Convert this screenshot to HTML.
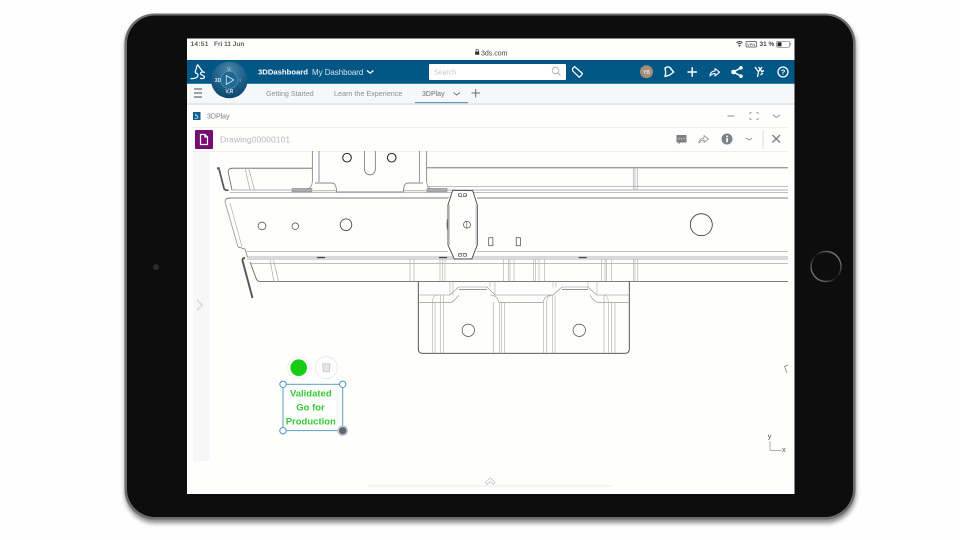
<!DOCTYPE html>
<html><head><meta charset="utf-8"><style>
html,body{margin:0;padding:0;width:960px;height:540px;overflow:hidden;background:#fefefe}
svg{position:absolute;left:0;top:0;display:block}
text{font-family:"Liberation Sans",sans-serif}
</style></head><body>
<svg width="960" height="540" viewBox="0 0 960 540" xmlns="http://www.w3.org/2000/svg">
<defs>
<filter id="sh" x="-5%" y="-5%" width="110%" height="115%"><feGaussianBlur stdDeviation="2.5"/></filter>
<filter id="b" x="-2%" y="-2%" width="104%" height="104%"><feGaussianBlur stdDeviation="0.35"/></filter>
<radialGradient id="cg" cx="50%" cy="25%" r="80%"><stop offset="0" stop-color="#4d87a8"/><stop offset=".55" stop-color="#1c5f88"/><stop offset="1" stop-color="#0a4468"/></radialGradient>
<linearGradient id="hb" x1="1" y1="0" x2="0" y2="1"><stop offset="0" stop-color="#a0a0a0"/><stop offset=".5" stop-color="#111"/><stop offset="1" stop-color="#a0a0a0"/></linearGradient>
</defs>
<rect x="125" y="17" width="731" height="506" rx="30" fill="#8a8a8a" filter="url(#sh)"/>
<g filter="url(#b)">
<!-- tablet -->
<rect x="124.500" y="13.500" width="731" height="506" rx="30" fill="#6d6d6d"/>
<rect x="127" y="15.500" width="726" height="501.500" rx="28" fill="#0a0a0a"/>
<circle cx="156" cy="267" r="3" fill="#2c2c2e"/>
<circle cx="826" cy="266.500" r="15" fill="none" stroke="url(#hb)" stroke-width="1.400"/>
<!-- screen -->
<rect x="187" y="38.500" width="607.500" height="455.500" fill="#fefefd"/>
<rect x="187" y="60" width="607.500" height="24" fill="#005685"/>
<rect x="187" y="83" width="607.500" height="1" fill="#2b86ab"/>
<rect x="187" y="84" width="607.500" height="19" fill="#f6f7f8"/>
<rect x="187" y="103" width="607.500" height="2" fill="#e6e7e9"/>
<rect x="415" y="102" width="53" height="1.200" fill="#5b9bbd"/>
<rect x="192" y="127" width="596" height="1" fill="#eeeeef"/>
<rect x="192" y="151" width="596" height="1" fill="#eeeeef"/>
<rect x="193" y="152" width="17" height="309" fill="#f7f7f8"/>
<!-- status bar -->
<text x="190.500" y="46" font-size="6.500" fill="#333" font-weight="700" opacity=".8" letter-spacing=".3">14:51</text>
<text x="214" y="46" font-size="6.500" fill="#333" font-weight="700" opacity=".8">Fri 11 Jun</text>
<rect x="475.200" y="51.500" width="4" height="3.300" fill="#333"/><path d="M476 51.500v-1a1.200 1.200 0 0 1 2.400 0v1" fill="none" stroke="#333" stroke-width=".6"/>
<text x="481" y="55.500" font-size="7" fill="#444">3ds.com</text>
<path d="M736.500 42.800a4 4 0 0 1 6 0M737.700 44.200a2.400 2.400 0 0 1 3.600 0" fill="none" stroke="#333" stroke-width="1"/><circle cx="739.500" cy="45.800" r=".9" fill="#333"/>
<rect x="746" y="41.500" width="10.500" height="5.500" rx="1" fill="none" stroke="#444" stroke-width=".7"/>
<text x="747" y="46" font-size="4" fill="#444">VPN</text>
<text x="759.500" y="46" font-size="6.500" font-weight="700" fill="#444">31 %</text>
<rect x="776.500" y="41.300" width="13" height="6" rx="1.500" fill="none" stroke="#777" stroke-width=".6"/>
<rect x="777.500" y="42.300" width="4" height="4" fill="#222"/>
<rect x="790" y="43" width=".8" height="2.500" fill="#888"/>
<!-- blue bar -->
<path d="M190.500 78.500c3 .5 7-.5 7.500-3 .3-1.700-1.500-2.500-3-2.500M197.500 64.500L195 72.500M197.500 64.500l5 7M205 72.500c-2-1-4.500-.5-4.500 1 0 2 4 1.500 4 3.500 0 1.500-2.500 2-4.500 1.200" fill="none" stroke="#fff" stroke-width="1.200"/>
<circle cx="229.300" cy="80" r="18.300" fill="url(#cg)"/>
<circle cx="229.300" cy="80" r="8.500" fill="#1f6a93" stroke="#5f94b2" stroke-width=".6"/>
<path d="M226.300 75.500l7.500 4.500-7.500 4.500z" fill="none" stroke="#dbe8ef" stroke-width=".8"/>
<text x="229.300" y="71" font-size="5" fill="#c8dbe6" text-anchor="middle">V.</text>
<text x="218" y="82" font-size="5" font-weight="700" fill="#dfeaf0" text-anchor="middle">3D</text>
<text x="240" y="82" font-size="5" fill="#c8dbe6" text-anchor="middle">i</text>
<text x="229.300" y="93" font-size="5" font-weight="700" fill="#dfeaf0" text-anchor="middle">V,R</text>
<text x="258" y="74.500" font-size="7.700" font-weight="700" fill="#fff">3DDashboard</text>
<text x="312" y="75" font-size="7.900" fill="#d6e5ee">My Dashboard</text>
<path d="M367 70.500l3.200 2.700 3.200-2.700" fill="none" stroke="#fff" stroke-width="1.300"/>
<rect x="429" y="64" width="137" height="16" rx="1" fill="#fff"/>
<text x="434" y="74.500" font-size="7" fill="#c4c7ca">Search</text>
<circle cx="555.500" cy="70.500" r="3.300" fill="none" stroke="#a5a9ad" stroke-width=".8"/><path d="M558 73l2.500 2.500" stroke="#a5a9ad" stroke-width=".9"/>
<path d="M572.500 68.500l2-2 8 7-1.200 1.800-2 2-6.500-6.300z" fill="none" stroke="#fff" stroke-width="1.200" stroke-linejoin="round"/>
<circle cx="646.500" cy="71.700" r="6.500" fill="#a58f78"/>
<text x="646.500" y="73.800" font-size="5" font-weight="700" fill="#e8e2d8" text-anchor="middle">YB</text>
<path d="M665 68c3-2 5-1 6 1l2.700 3-4 3-4.700 1.500c.8-2.500.8-5.500 0-8.500z" fill="none" stroke="#fff" stroke-width="1.400" stroke-linejoin="round"/>
<path d="M687.500 72h9.500M692.200 67.300v9.500" stroke="#fff" stroke-width="1.500"/>
<path d="M710 76c0-3 2-5 5-5v-2.500l4.500 3.700-4.500 3.700v-2.400c-2 0-3.500 .6-5 2.500z" fill="none" stroke="#fff" stroke-width="1.100" stroke-linejoin="round"/>
<path d="M741 67.800L733.500 72l7.500 4.200" fill="none" stroke="#fff" stroke-width="1.500"/><circle cx="733.500" cy="72" r="2.300" fill="#fff"/><circle cx="741" cy="67.800" r="1.800" fill="#fff"/><circle cx="741" cy="76.200" r="1.800" fill="#fff"/>
<path d="M755 67l3.500 5-1 5M758.500 67l3 4M762 67l-3.500 4.500M761 72l3-1.500M760.500 75l2.500-2" fill="none" stroke="#fff" stroke-width="1.300"/>
<circle cx="783" cy="72" r="5" fill="none" stroke="#fff" stroke-width="1.300"/>
<text x="783" y="74.700" font-size="7.500" font-weight="700" fill="#fff" text-anchor="middle">?</text>
<!-- tabs -->
<path d="M194 89h8M194 93h8M194 97h8" stroke="#6d7176" stroke-width="1.200"/>
<text x="266" y="96" font-size="7.100" fill="#8c9094">Getting Started</text>
<text x="334" y="96" font-size="7.200" fill="#8c9094">Learn the Experience</text>
<text x="422" y="96" font-size="7" fill="#6a6e72">3DPlay</text>
<path d="M453.500 92.500l3.200 2.500 3.200-2.500" fill="none" stroke="#6a6e72" stroke-width=".9"/>
<path d="M471.500 93h8.500M475.700 89v8.500" stroke="#6a6e72" stroke-width="1"/>
<!-- widget header -->
<rect x="193" y="112" width="7.500" height="8" fill="#0f5f90"/>
<path d="M194.500 118.500c2 .3 3.500-.4 3.500-1.400s-1-1-1.400-1M196 113.500l-.6 2 2-.3" fill="none" stroke="#fff" stroke-width=".6"/>
<text x="207" y="118.500" font-size="7" fill="#777b80">3DPlay</text>
<path d="M727.500 116h7" stroke="#85898d" stroke-width="1"/>
<path d="M750 112.500h1.500M750 112.500v1.500M758 112.500h-1.500M758 112.500v1.500M750 119.500h1.500M750 119.500v-1.500M758 119.500h-1.500M758 119.500v-1.500" fill="none" stroke="#85898d" stroke-width=".8"/>
<path d="M773 115l3.500 2.500 3.500-2.500" fill="none" stroke="#85898d" stroke-width=".9"/>
<!-- toolbar -->
<rect x="195" y="130" width="18" height="19" rx="1" fill="#76106f"/>
<path d="M200.500 134.500h4.500l2.500 2.500v7.500h-7zM205 134.500v2.500h2.500" fill="none" stroke="#fff" stroke-width="1.200"/>
<text x="220" y="142.500" font-size="8.500" fill="#b5b8bb" letter-spacing=".08">Drawing00000101</text>
<path d="M676.500 135h10v7.500h-6l-2 2v-2h-2z" fill="#7d8084"/><path d="M678.500 138.700h6" stroke="#fff" stroke-width="1" stroke-dasharray="1 1.500"/>
<path d="M699 143c0-3 2-4.800 5-5v-2.500l4.500 3.500-4.500 3.500V140c-2 0-3.500 .8-5 3z" fill="none" stroke="#9a9da1" stroke-width=".9" stroke-linejoin="round"/>
<circle cx="727" cy="139" r="5.500" fill="#7d8084"/><rect x="726.200" y="138" width="1.700" height="4.200" fill="#fff"/><rect x="726.200" y="135.600" width="1.700" height="1.500" fill="#fff"/>
<path d="M746 138l3 2 3-2" fill="none" stroke="#8b8e92" stroke-width=".9"/>
<rect x="762.500" y="130" width="1" height="19" fill="#d8d9db"/>
<path d="M772.500 135l7.500 7.500M780 135l-7.500 7.500" stroke="#7b7e82" stroke-width="1.400"/>
<path d="M197 299.500l5 5.500-5 5.500" fill="none" stroke="#dcdddf" stroke-width="1.800"/>
<!-- drawing -->
<g fill="none" stroke="#555" stroke-width=".7">
<path d="M312 168.200H232q-4 0-3.800 4L232 190M427 167.800H788" stroke="#666" stroke-width=".8"/>
<path d="M427 186.700H788M232 190H292M447 190H788M230 192.300H788M230 197.300H449M477 197.300H788M477 198.700H788M226 198.700H448" stroke="#999"/>
<path d="M245 168l5 22M248.500 168l6 22M633.300 168v22M635 168v22M637.300 168v22" stroke="#aaa"/>
<path d="M217 168.500l1.800-.5 5.200 20.500q1 2 4.500 1.800" stroke="#555" stroke-width="1.700"/>
<path d="M230 197.800q-5 .5-5 4L238 247l7 2 2.500 8" stroke="#666"/>
<path d="M225 202l13 45M230 203l12 44" stroke="#aaa" stroke-width=".6"/>
<path d="M245 258q-3 0-2.500 2.500L252.500 298" stroke="#555" stroke-width="1.900"/>
<path d="M250 262l6 16q1 3.400 4 3.500H788" stroke="#555" stroke-width=".8"/>
<path d="M247 251.300H448M477 251.300H788M247 257H788M247 259H788M250 263.300H788" stroke="#999"/>
<path d="M270 260l4 21.500M273.500 260l5 21.500" stroke="#aaa"/>
<path d="M410 259v22M414 259v22M440 259v22M442.700 259v22M445 259v22M503.300 259v22M508.300 259v22M510 259v22M514 259v22M533.300 259v22M535.700 259v22M539 259v22M544.300 259v22M601.700 259v22M605 259v22M606.700 259v22M611.700 259v22M633.300 259v22M635 259v22M637.300 259v22" stroke="#aaa" stroke-width=".6"/>
<path d="M317 257.500h8M439 257.500h8M578.700 257.500h8" stroke="#444" stroke-width="1.200"/>
<path d="M312.300 151v31M319 151v31M419.300 151v31M426.700 151v31" stroke="#666"/>
<path d="M312.300 182q-.5 6-5 7M426.700 182q.5 6 5 7" stroke="#888"/>
<path d="M315 183h17q3 0 4 4l.7 5h66.600l.7-5q1-4 4-4h15" stroke="#666"/>
<path d="M313 190.800h23M403.500 190.800h24" stroke="#888"/>
<rect x="292" y="188.500" width="20" height="3.500" fill="#aaadb0" stroke="#777" stroke-width=".5"/>
<rect x="427" y="188.500" width="20" height="3.500" fill="#aaadb0" stroke="#777" stroke-width=".5"/>
<circle cx="347" cy="157.700" r="4.300" stroke="#222" stroke-width="1"/>
<circle cx="391.700" cy="157.700" r="4.300" stroke="#222" stroke-width="1"/>
<path d="M364.500 151v18.500a5.400 5.400 0 0 0 10.800 0V151" stroke="#666"/>
<path d="M452.700 190.300l20 .4 4.600 14.300v40l-5.600 14H454.300l-6.300-14v-40z" fill="#fefefd" stroke="#444" stroke-width=".9"/>
<path d="M449.500 205v40M476 205v40" stroke="#aaa" stroke-width=".6"/>
<circle cx="467" cy="224.700" r="3.500" stroke="#444"/><path d="M466.800 221.200v7" stroke="#444" stroke-width=".6"/>
<path d="M458 194a5 5 0 0 0 9 0" stroke="#888"/><circle cx="460" cy="195" r="1.700" stroke="#666"/><circle cx="465" cy="195" r="1.700" stroke="#666"/>
<path d="M458 256a5 5 0 0 1 9 0" stroke="#888"/><circle cx="460" cy="255" r="1.700" stroke="#666"/><circle cx="465" cy="255" r="1.700" stroke="#666"/>
<path d="M447.500 219q-1 5 0 11" stroke="#777" stroke-width="1"/>
<rect x="488.700" y="237.700" width="4.200" height="8" stroke="#444"/>
<rect x="516.200" y="237.700" width="4.200" height="8" stroke="#444"/>
<circle cx="262" cy="226" r="3.900" stroke="#444"/>
<circle cx="295.300" cy="226.200" r="3.300" stroke="#444"/>
<circle cx="346" cy="224.700" r="5.800" stroke="#333" stroke-width=".8"/>
<circle cx="701.300" cy="224.700" r="11" stroke="#333" stroke-width=".8"/>
<path d="M418.300 281.500V349q0 4.300 4.300 4.300H625q4.300 0 4.300-4.300V281.500" stroke="#444" stroke-width=".9"/>
<path d="M418.300 295H450l8-7.500q.5-.5 1.500-.5H487l8 8h58l9-8h26l8.500 8H629.300M418.300 302.300H450q3 0 5-3l4-4M490 295q7 0 9 7.300H543q2-7 9-7.300M590 295q4 7 8 7.300H629.300M499 302.300H543" stroke="#888" stroke-width=".6"/>
<path d="M459 289.300H487M562 289.300H588" stroke="#555" stroke-width=".7"/>
<path d="M450 281.500v14M453 281.500v14M490 281.500v6M495 281.500v14M553 281.500v6M556 281.500v6M588 281.500v8M597 281.500v14" stroke="#aaa" stroke-width=".6"/>
<path d="M432.300 353V302q0-6 5-7M435 353V302M440.700 353V295M443.300 353V295M493.300 353V302M499.300 353V302M501.700 353V302M504.300 353V302M543.300 353V302M546.700 353V302q0-6 6-7M552.300 353V295M555 353V295M604 353V295M608.300 353V302q0-6-4-7M611.700 353V302M615 353V302" stroke="#aaa" stroke-width=".6"/>
<circle cx="468.300" cy="330.300" r="6.200" stroke="#444"/>
<circle cx="579.300" cy="330.300" r="6.200" stroke="#444"/>
</g>
<path d="M788 365l-3.500 1.500 2.500 6.500" fill="none" stroke="#777" stroke-width=".7"/>
<path d="M770 441v9.500h12" fill="none" stroke="#999" stroke-width=".8"/>
<text x="767.800" y="438.500" font-size="7.500" fill="#555">y</text>
<text x="782" y="452" font-size="7.500" fill="#555">x</text>
<!-- annotation -->
<circle cx="298.700" cy="367.700" r="11" fill="#fff" stroke="#ececec" stroke-width=".8"/>
<circle cx="298.700" cy="367.700" r="8.300" fill="#12cc12"/>
<circle cx="326.300" cy="367.700" r="11" fill="#fff" stroke="#e6e6e6" stroke-width=".8"/>
<path d="M322.500 363.800h7.600l-.9 8h-5.800zM322 363.800h8.600" fill="#e6e6e6" stroke="#b8b8b8" stroke-width=".7"/>
<rect x="283" y="384.300" width="59.700" height="46.300" fill="#fff" stroke="#5a9cc6" stroke-width="1"/>
<g font-size="9.500" font-weight="700" fill="#35c935" text-anchor="middle">
<text x="310.800" y="396.500">Validated</text>
<text x="310.500" y="410.500">Go for</text>
<text x="310.800" y="424.500">Production</text>
</g>
<circle cx="283" cy="384.300" r="3.200" fill="#fff" stroke="#4d93c2" stroke-width="1"/>
<circle cx="342.700" cy="384.300" r="3.200" fill="#fff" stroke="#4d93c2" stroke-width="1"/>
<circle cx="283" cy="430.700" r="3.200" fill="#fff" stroke="#4d93c2" stroke-width="1"/>
<circle cx="342.700" cy="430.700" r="5.300" fill="#bcc2c8"/>
<circle cx="342.700" cy="430.700" r="3.600" fill="#5d6670"/>
<!-- bottom handle -->
<path d="M368 486H612" stroke="#ececec" stroke-width="1"/>
<path d="M485.500 482l4.700-4 4.700 4M485.500 482l1.500 2.500 3.200-2.800 3.200 2.800 1.500-2.500" fill="none" stroke="#bfc0c2" stroke-width=".8"/>
</g>
</svg>
</body></html>
